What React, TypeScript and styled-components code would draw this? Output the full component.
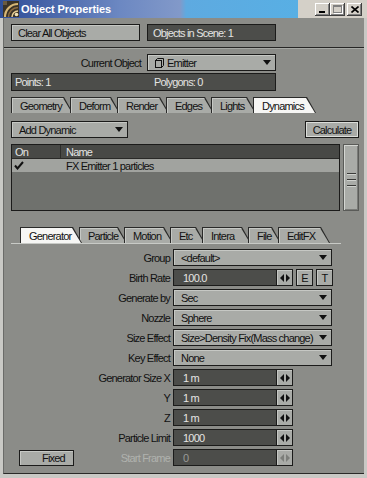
import styled, { createGlobalStyle } from "styled-components";

const colors = {
  panel: "#8b8c88",
  raised: "#a9aba7",
  raisedHi: "#c6c8c4",
  field: "#4c4d4a",
  fieldText: "#e4e4e2",
  ink: "#111111",
  line: "#1b1b1a",
  frame: "#c9c9c5",
  listBg: "#6f716d",
  rowSel: "#a1a39f",
  header: "#484946",
  activeTab: "#f6f6f4",
  dim: "#b0b2ae",
  chrome: "#d4d0c8"
};

const GlobalStyle = createGlobalStyle`
  html, body {
    margin: 0;
    padding: 0;
    background: ${colors.panel};
    overflow: hidden;
  }
  body {
    font-family: "Liberation Sans", Arial, sans-serif;
    font-size: 11px;
    letter-spacing: -0.8px;
    color: ${colors.ink};
  }
  * {
    box-sizing: border-box;
  }
`;

interface TabSpec {
  label: string;
  width: number;
  active?: boolean;
}

const objectTabs: TabSpec[] = [
  { label: "Geometry", width: 62 },
  { label: "Deform", width: 50 },
  { label: "Render", width: 52 },
  { label: "Edges", width: 48 },
  { label: "Lights", width: 45 },
  { label: "Dynamics", width: 63, active: true }
];

const fxTabs: TabSpec[] = [
  { label: "Generator", width: 62, active: true },
  { label: "Particle", width: 48 },
  { label: "Motion", width: 49 },
  { label: "Etc", width: 35 },
  { label: "Intera", width: 49 },
  { label: "File", width: 33 },
  { label: "EditFX", width: 52 }
];

function AppIcon() {
  return (
    <svg width="16" height="16" viewBox="0 0 16 16">
      <rect width="16" height="16" fill="#3a3226" />
      <path d="M2 16 A13 13 0 0 1 15 3" stroke="#d6b676" strokeWidth="2.2" fill="none" />
      <path d="M5.5 16 A9.5 9.5 0 0 1 15 6.5" stroke="#8c6c42" strokeWidth="1.6" fill="none" />
      <path d="M9 16 A6 6 0 0 1 15 10" stroke="#e4cc94" strokeWidth="1.6" fill="none" />
      <circle cx="13.5" cy="13.5" r="1.8" fill="#f2e2b4" />
      <rect x="0" y="0" width="4" height="4" fill="#6a5a40" />
    </svg>
  );
}

function SpinGlyph() {
  return (
    <svg width="10" height="8" viewBox="0 0 10 8">
      <polygon points="0,4 4,0 4,8" fill="currentColor" />
      <polygon points="6,0 10,4 6,8" fill="currentColor" />
    </svg>
  );
}

function CheckGlyph() {
  return (
    <svg width="10" height="9" viewBox="0 0 10 9">
      <polyline points="1,4.5 3.5,7.5 9,1" stroke="#111" strokeWidth="2" fill="none" />
    </svg>
  );
}

function ObjectGlyph() {
  return (
    <svg width="9" height="10" viewBox="0 0 9 10">
      <rect x="0.5" y="2.5" width="6" height="7" stroke="#111" fill="none" />
      <path d="M0.5 2.5 L2.5 0.5 L8.5 0.5 L8.5 7.5 L6.5 9.5" stroke="#111" fill="none" />
    </svg>
  );
}

function CloseGlyph() {
  return (
    <svg width="8" height="7" viewBox="0 0 8 7">
      <path d="M0.5 0.5 L7.5 6.5 M7.5 0.5 L0.5 6.5" stroke="#000" strokeWidth="1.6" />
    </svg>
  );
}

function Tabs({ tabs, indent }: { tabs: TabSpec[]; indent: number }) {
  return (
    <TabStrip $indent={indent}>
      {tabs.map((tab) => (
        <TabOutline key={tab.label} $width={tab.width} $active={tab.active}>
          <TabFace $active={tab.active}>{tab.label}</TabFace>
        </TabOutline>
      ))}
    </TabStrip>
  );
}

function Select({ value, width }: { value: string; width: number }) {
  return (
    <SelectBox $width={width}>
      <span>{value}</span>
      <Caret />
    </SelectBox>
  );
}

function NumberInput({ value, disabled }: { value: string; disabled?: boolean }) {
  return (
    <FieldGroup>
      <NumberField $disabled={disabled}>{value}</NumberField>
      <SpinButton $disabled={disabled}>
        <SpinGlyph />
      </SpinButton>
    </FieldGroup>
  );
}

export default function App() {
  return (
    <>
      <GlobalStyle />
      <Window>
        <TitleBar>
          <TitleGradient>
            <AppIcon />
            <TitleText>Object Properties</TitleText>
          </TitleGradient>
          <CaptionButtons>
            <CaptionButton>
              <MinGlyph />
            </CaptionButton>
            <CaptionButton>
              <MaxGlyph />
            </CaptionButton>
            <CaptionButton $gap>
              <CloseGlyph />
            </CaptionButton>
          </CaptionButtons>
        </TitleBar>

        <Body>
          <TopSection>
            <PanelButton $width={129} $inset={6}>
              Clear All Objects
            </PanelButton>
            <InfoField $width={129}>Objects in Scene: 1</InfoField>
          </TopSection>
          <Separator />

          <MainSection>
            <CurrentRow>
              <RowLabel>Current Object</RowLabel>
              <SelectBox $width={129}>
                <ObjectGlyph />
                <span>Emitter</span>
                <Caret />
              </SelectBox>
            </CurrentRow>

            <StatsBar>
              <span>Points: 1</span>
              <span>Polygons: 0</span>
            </StatsBar>

            <Tabs tabs={objectTabs} indent={0} />

            <ToolRow>
              <Select value="Add Dynamic" width={117} />
              <PanelButton $width={54} $framed>
                Calculate
              </PanelButton>
            </ToolRow>

            <ListRow>
              <ItemList>
                <ListHeader>
                  <HeaderCell $divider>On</HeaderCell>
                  <HeaderCell>Name</HeaderCell>
                </ListHeader>
                <ListItem>
                  <CheckCell>
                    <CheckGlyph />
                  </CheckCell>
                  <span>FX Emitter 1 particles</span>
                </ListItem>
              </ItemList>
              <ScrollTrack>
                <Grip />
                <Grip />
                <Grip />
              </ScrollTrack>
            </ListRow>

            <FxTabs>
              <Tabs tabs={fxTabs} indent={9} />
            </FxTabs>

            <Form>
              <FormRow>
                <RowLabel>Group</RowLabel>
                <Select value="<default>" width={159} />
              </FormRow>
              <FormRow>
                <RowLabel>Birth Rate</RowLabel>
                <FieldGroup>
                  <NumberInput value="100.0" />
                  <SmallButton>E</SmallButton>
                  <SmallButton>T</SmallButton>
                </FieldGroup>
              </FormRow>
              <FormRow>
                <RowLabel>Generate by</RowLabel>
                <Select value="Sec" width={159} />
              </FormRow>
              <FormRow>
                <RowLabel>Nozzle</RowLabel>
                <Select value="Sphere" width={159} />
              </FormRow>
              <FormRow>
                <RowLabel>Size Effect</RowLabel>
                <Select value="Size>Density Fix(Mass change)" width={159} />
              </FormRow>
              <FormRow>
                <RowLabel>Key Effect</RowLabel>
                <Select value="None" width={159} />
              </FormRow>
              <FormRow>
                <RowLabel>Generator Size X</RowLabel>
                <NumberInput value="1 m" />
              </FormRow>
              <FormRow>
                <RowLabel>Y</RowLabel>
                <NumberInput value="1 m" />
              </FormRow>
              <FormRow>
                <RowLabel>Z</RowLabel>
                <NumberInput value="1 m" />
              </FormRow>
              <FormRow>
                <RowLabel>Particle Limit</RowLabel>
                <NumberInput value="1000" />
              </FormRow>
              <FormRow>
                <LabelCell>
                  <PanelButton $width={55} $height={16} $inset={22}>
                    Fixed
                  </PanelButton>
                  <RowLabel $disabled>Start Frame</RowLabel>
                </LabelCell>
                <NumberInput value="0" disabled />
              </FormRow>
            </Form>
          </MainSection>
        </Body>
      </Window>
    </>
  );
}

const Window = styled.div`
  width: 367px;
  height: 478px;
  display: flex;
  flex-direction: column;
  background: ${colors.frame};
`;

const TitleBar = styled.div`
  height: 18px;
  display: flex;
  background: ${colors.chrome};
`;

const TitleGradient = styled.div`
  width: 298px;
  display: flex;
  align-items: center;
  gap: 2px;
  padding-left: 3px;
  background: linear-gradient(
    90deg,
    #2f4e98 0,
    #6c88c2 120px,
    #8299c9 180px,
    #5eaae0 186px,
    #58afe4 298px
  );
`;

const TitleText = styled.span`
  font-family: "Liberation Sans", Arial, sans-serif;
  font-weight: 700;
  font-size: 11px;
  letter-spacing: -0.1px;
  color: #ffffff;
`;

const CaptionButtons = styled.div`
  margin-left: auto;
  padding-right: 5px;
  display: flex;
  align-items: center;
`;

const CaptionButton = styled.div<{ $gap?: boolean }>`
  width: 15px;
  height: 13px;
  margin-left: ${({ $gap }) => ($gap ? "2px" : "0")};
  display: flex;
  align-items: center;
  justify-content: center;
  background: ${colors.chrome};
  box-shadow:
    inset -1px -1px 0 #404040,
    inset 1px 1px 0 #ffffff,
    inset -2px -2px 0 #808080;
`;

const MinGlyph = styled.span`
  width: 6px;
  height: 2px;
  margin-top: 6px;
  margin-right: 2px;
  background: #000;
`;

const MaxGlyph = styled.span`
  width: 9px;
  height: 8px;
  border: 1px solid #808080;
  border-top-width: 2px;
  box-shadow: 1px 1px 0 #ffffff;
`;

const Body = styled.div`
  flex: 1;
  margin: 0 3px 4px 3px;
  display: flex;
  flex-direction: column;
  background: ${colors.panel};
  border-left: 1px solid #6a6b68;
  border-bottom: 1px solid #2a2a28;
`;

const TopSection = styled.div`
  height: 29px;
  padding: 6px 0 0 7px;
  display: flex;
  gap: 7px;
`;

const Separator = styled.div`
  height: 2px;
  border-top: 1px solid #262625;
  border-bottom: 1px solid #a6a8a4;
`;

const MainSection = styled.div`
  padding: 5px 5px 0 7px;
  display: flex;
  flex-direction: column;
`;

const PanelButton = styled.div<{
  $width: number;
  $height?: number;
  $framed?: boolean;
  $inset?: number;
}>`
  width: ${({ $width }) => $width}px;
  height: ${({ $height }) => $height ?? 17}px;
  flex: none;
  padding-left: ${({ $inset }) => $inset ?? 0}px;
  display: flex;
  align-items: center;
  justify-content: ${({ $inset }) => ($inset ? "flex-start" : "center")};
  background: ${colors.raised};
  border: 1px solid ${colors.line};
  box-shadow: ${({ $framed }) =>
    $framed ? "inset 0 0 0 1px #dcdeda" : `inset 1px 1px 0 ${colors.raisedHi}`};
  white-space: nowrap;
`;

const InfoField = styled.div<{ $width: number }>`
  width: ${({ $width }) => $width}px;
  height: 17px;
  padding-left: 5px;
  display: flex;
  align-items: center;
  background: ${colors.field};
  border: 1px solid ${colors.line};
  color: ${colors.fieldText};
  white-space: nowrap;
`;

const CurrentRow = styled.div`
  height: 17px;
  display: grid;
  grid-template-columns: 130px 129px;
  column-gap: 6px;
`;

const RowLabel = styled.span<{ $disabled?: boolean }>`
  display: flex;
  align-items: center;
  justify-content: flex-end;
  color: ${({ $disabled }) => ($disabled ? colors.dim : colors.ink)};
  white-space: nowrap;
`;

const SelectBox = styled.div<{ $width: number }>`
  width: ${({ $width }) => $width}px;
  height: 17px;
  padding: 0 4px 0 7px;
  display: flex;
  align-items: center;
  gap: 3px;
  background: ${colors.raised};
  border: 1px solid ${colors.line};
  box-shadow: inset 1px 1px 0 ${colors.raisedHi};
  white-space: nowrap;
  overflow: hidden;
`;

const Caret = styled.span`
  margin-left: auto;
  flex: none;
  width: 0;
  height: 0;
  border-left: 4.5px solid transparent;
  border-right: 4.5px solid transparent;
  border-top: 5px solid ${colors.ink};
`;

const StatsBar = styled.div`
  width: 265px;
  height: 18px;
  margin-top: 2px;
  padding-left: 3px;
  display: grid;
  grid-template-columns: 139px 1fr;
  align-items: center;
  background: ${colors.field};
  border: 1px solid ${colors.line};
  color: ${colors.fieldText};
`;

const TabStrip = styled.div<{ $indent: number }>`
  height: 16px;
  margin-top: 6px;
  padding-left: ${({ $indent }) => $indent}px;
  display: flex;
`;

const TabOutline = styled.div<{ $width: number; $active?: boolean }>`
  position: relative;
  z-index: ${({ $active }) => ($active ? 2 : 1)};
  width: ${({ $width }) => $width}px;
  height: 16px;
  margin-right: -3px;
  padding: 1px 1px 0 1px;
  background: #2a2a29;
  clip-path: polygon(0 0, calc(100% - 9px) 0, 100% 100%, 0 100%);
`;

const TabFace = styled.div<{ $active?: boolean }>`
  height: 100%;
  padding-left: 8px;
  display: flex;
  align-items: center;
  background: ${({ $active }) => ($active ? colors.activeTab : colors.raised)};
  box-shadow: ${({ $active }) => ($active ? "none" : `inset 1px 1px 0 ${colors.raisedHi}`)};
  clip-path: polygon(0 0, calc(100% - 9px) 0, 100% 100%, 0 100%);
  white-space: nowrap;
`;

const ToolRow = styled.div`
  height: 17px;
  margin-top: 8px;
  display: flex;
  justify-content: space-between;
`;

const ListRow = styled.div`
  height: 67px;
  margin-top: 6px;
  display: flex;
  gap: 3px;
`;

const ItemList = styled.div`
  width: 329px;
  background: ${colors.listBg};
  border: 1px solid ${colors.line};
`;

const ListHeader = styled.div`
  height: 14px;
  display: grid;
  grid-template-columns: 49px 1fr;
  background: ${colors.header};
  border-bottom: 1px solid #2a2a28;
  color: ${colors.fieldText};
`;

const HeaderCell = styled.div<{ $divider?: boolean }>`
  padding-left: ${({ $divider }) => ($divider ? "3px" : "5px")};
  display: flex;
  align-items: center;
  border-right: ${({ $divider }) => ($divider ? "1px solid #2c2c2a" : "none")};
`;

const ListItem = styled.div`
  height: 13px;
  display: grid;
  grid-template-columns: 54px 1fr;
  align-items: center;
  background: ${colors.rowSel};
  white-space: nowrap;
`;

const CheckCell = styled.div`
  padding-left: 2px;
  display: flex;
  align-items: center;
`;

const ScrollTrack = styled.div`
  width: 16px;
  display: flex;
  flex-direction: column;
  align-items: center;
  justify-content: center;
  gap: 4px;
  padding-top: 4px;
  background: ${colors.raised};
  border: 1px solid #5a5b58;
  box-shadow:
    inset 1px 1px 0 #d4d6d2,
    inset -1px -1px 0 #7a7b78;
`;

const Grip = styled.span`
  width: 9px;
  height: 2px;
  border-top: 1px solid #3a3a38;
  border-bottom: 1px solid #d0d2ce;
`;

const FxTabs = styled.div`
  width: 330px;
  margin-top: 10px;
  border-bottom: 1px solid #c8cac6;
`;

const Form = styled.div`
  margin-top: 5px;
  display: flex;
  flex-direction: column;
  gap: 3px;
`;

const FormRow = styled.div`
  height: 17px;
  display: grid;
  grid-template-columns: 159px auto;
  justify-content: start;
  column-gap: 3px;
`;

const LabelCell = styled.div`
  padding-left: 8px;
  display: flex;
  align-items: center;
  justify-content: space-between;
`;

const FieldGroup = styled.div`
  display: flex;
  align-items: stretch;
`;

const NumberField = styled.div<{ $disabled?: boolean }>`
  width: 104px;
  height: 17px;
  padding-left: 9px;
  display: flex;
  align-items: center;
  background: ${colors.field};
  border: 1px solid ${colors.line};
  color: ${({ $disabled }) => ($disabled ? "#9a9c98" : colors.fieldText)};
`;

const SpinButton = styled.div<{ $disabled?: boolean }>`
  width: 16px;
  height: 17px;
  display: flex;
  align-items: center;
  justify-content: center;
  background: ${colors.raised};
  border: 1px solid ${colors.line};
  border-left: none;
  box-shadow: inset 1px 1px 0 ${colors.raisedHi};
  color: ${({ $disabled }) => ($disabled ? "#7c7e7a" : colors.ink)};
`;

const SmallButton = styled.div`
  width: 17px;
  height: 17px;
  margin-left: 3px;
  display: flex;
  align-items: center;
  justify-content: center;
  background: ${colors.raised};
  border: 1px solid ${colors.line};
  box-shadow: inset 1px 1px 0 ${colors.raisedHi};
`;
